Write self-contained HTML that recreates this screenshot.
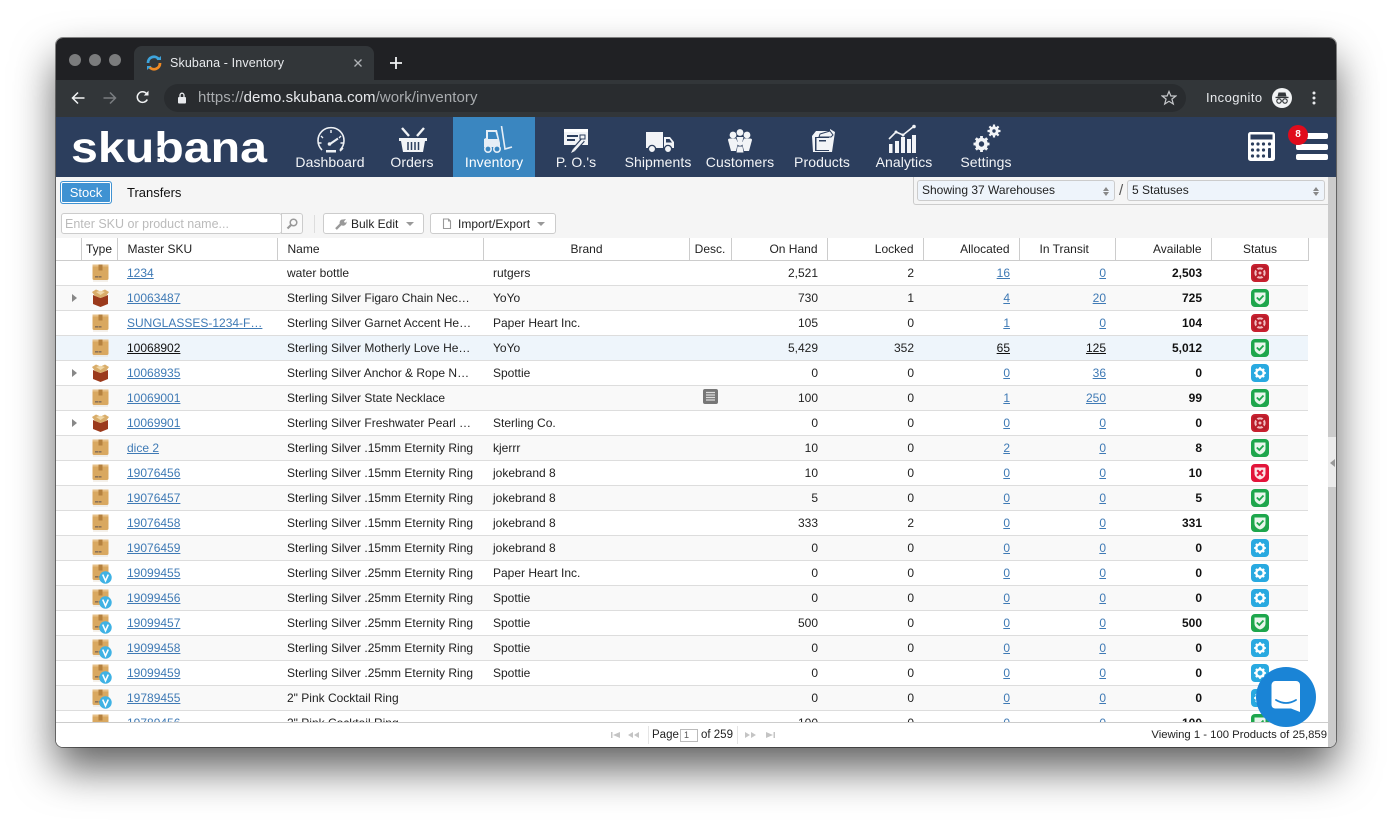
<!DOCTYPE html>
<html><head><meta charset="utf-8"><title>Skubana - Inventory</title>
<style>
*{box-sizing:border-box}
html,body{margin:0;padding:0;width:1392px;height:821px;background:#fff;overflow:hidden;font-family:"Liberation Sans",sans-serif;font-size:12px;color:#222}
.a{position:absolute}
#win{position:absolute;left:56px;top:38px;width:1280px;height:709px;border-radius:7px;box-shadow:0 22px 42px 0 rgba(0,0,0,.62),0 0 0 1px rgba(0,0,0,.45)}
#pg{position:absolute;left:0;top:0;width:1392px;height:821px}
.nl{position:absolute;top:154px;width:82px;text-align:center;font-size:14px;line-height:16px;color:#f2f4f7;letter-spacing:.08px}
.btn{position:absolute;top:213px;height:21px;background:#fff;border:1px solid #ccc;border-radius:3px;font-size:12px;line-height:20px;color:#222}
.car{position:absolute;width:0;height:0;border-left:4px solid transparent;border-right:4px solid transparent;border-top:4px solid #999;top:8px}
table{border-collapse:collapse;table-layout:fixed;width:1252px}
th{font-weight:normal;height:22px;padding:0 9px 0 10px;border-right:1px solid #ccc;border-bottom:1px solid #ccc;text-align:left;white-space:nowrap;background:#fff;color:#222}
td{height:25px;padding:0 9px 0 10px;border-bottom:1px solid #ddd;white-space:nowrap;overflow:hidden;color:#222}
tr.o td{background:#fff}tr.e td{background:#f9f9f9}tr.h td{background:#eef5fb}
td.n,th.n{text-align:right}
td b{font-weight:bold;color:#111}
td a{color:#3f7ab5;text-decoration:underline}
tr.h td a{color:#111}
td.i{padding:0;text-align:center;position:relative}
td.i svg{display:block;position:absolute}
td.ar{padding:0;position:relative}
.tri{position:absolute;left:16px;top:8px;width:0;height:0;border-top:4px solid transparent;border-bottom:4px solid transparent;border-left:5px solid #888}
.sel{position:absolute;top:180px;height:21px;background:#eef4fb;border:1px solid #ccc;border-radius:3px;font-size:12px;line-height:19px;padding-left:4px;color:#222}
.sel i{position:absolute;right:5px;width:0;height:0;border-left:3px solid transparent;border-right:3px solid transparent}
.sel i.u{top:6px;border-bottom:4px solid #888}.sel i.d{top:11px;border-top:4px solid #888}
</style></head><body>
<svg width="0" height="0" style="position:absolute">
<defs>
<symbol id="box" viewBox="0 0 17 18"><rect x="0.5" y="0.5" width="16" height="15.5" rx="1.5" fill="#d9a860"/><rect x="0.5" y="0.5" width="16" height="2" fill="#e6c088"/><rect x="6.5" y="0.5" width="4" height="6" fill="#b5813e"/><rect x="3" y="12" width="3" height="1.6" fill="#8a7258"/><rect x="6.5" y="12" width="3" height="1.6" fill="#8a7258"/><rect x="1" y="16.5" width="15" height="1" fill="#e8e1d6"/></symbol>
<symbol id="kit" viewBox="0 0 19 18"><path d="M2 6L9.5 9L17 6V15L9.5 18L2 15Z" fill="#9b3a1c"/><path d="M1 3L5 0.5L9.5 2.5L14 0.5L18 3L15 7L9.5 9L4 7Z" fill="#d9ad6a"/><path d="M5 3L9.5 1.8L14 3L9.5 6Z" fill="#f0d8a8"/></symbol>
<symbol id="life" viewBox="0 0 18 18"><rect width="18" height="18" rx="4" fill="#c7202f"/><rect x="2" y="2" width="14" height="14" rx="2" fill="#b81c2a"/><circle cx="9" cy="9" r="4.600" fill="none" stroke="#f2bcc1" stroke-width="2"/><circle cx="9" cy="9" r="1.500" fill="#f2bcc1"/><path d="M5 5L7.300 7.300M13 5L10.700 7.300M5 13L7.300 10.700M13 13L10.700 10.700" stroke="#b81c2a" stroke-width="1.800"/></symbol>
<symbol id="ok" viewBox="0 0 18 18"><rect width="18" height="18" rx="4" fill="#1ea64c"/><path d="M3.500 3.500H14.500V9.500C14.500 12.500 12 14.500 9 15.500C6 14.500 3.500 12.500 3.500 9.500Z" fill="#e9f6ec"/><path d="M5.800 8.500L8.300 11L12.500 6.500" fill="none" stroke="#1ea64c" stroke-width="1.800"/></symbol>
<symbol id="gear" viewBox="0 0 18 18"><rect width="18" height="18" rx="4" fill="#29a9e0"/><circle cx="9" cy="9" r="3.700" fill="none" stroke="#fff" stroke-width="2.400"/><path d="M9 3.200V5.500M9 12.500V14.800M3.200 9H5.500M12.500 9H14.800M4.900 4.900L6.500 6.500M11.500 11.500L13.100 13.100M13.100 4.900L11.500 6.500M6.500 11.500L4.900 13.100" stroke="#fff" stroke-width="2"/></symbol>
<symbol id="xx" viewBox="0 0 18 18"><rect width="18" height="18" rx="4" fill="#e2143a"/><path d="M3.500 3.500H14.500V9.500C14.500 12.500 12 14.500 9 15.500C6 14.500 3.500 12.500 3.500 9.500Z" fill="#fbe3e7"/><path d="M6.200 6.200L11.800 11.800M11.800 6.200L6.200 11.800" stroke="#e2143a" stroke-width="2.100"/></symbol>
<symbol id="v" viewBox="0 0 14 14"><circle cx="7" cy="7" r="6.700" fill="#3fb2e4"/><path d="M4 3.800L7 10.600L10 3.800" fill="none" stroke="#fff" stroke-width="1.700"/></symbol>
</defs></svg>

<div id="win"></div>
<div id="pg">
<!-- Chrome -->
<div class="a" style="left:56px;top:38px;width:1280px;height:709px;border-radius:7px;overflow:hidden;background:#fff">
<div class="a" style="left:0;top:0;width:1280px;height:42px;background:#202124"></div>
<div class="a" style="left:0;top:42px;width:1280px;height:37px;background:#323639"></div>
<div class="a" style="left:78px;top:8px;width:240px;height:34px;background:#323639;border-radius:8px 8px 0 0"></div>
</div>
<div class="a" style="left:69px;top:54px;width:12px;height:12px;border-radius:50%;background:#7b7c7d"></div>
<div class="a" style="left:89px;top:54px;width:12px;height:12px;border-radius:50%;background:#7b7c7d"></div>
<div class="a" style="left:109px;top:54px;width:12px;height:12px;border-radius:50%;background:#7b7c7d"></div>
<svg class="a" style="left:146px;top:55px" width="16" height="16" viewBox="0 0 16 16"><path d="M2 8A6 6 0 0 1 13 4.500" fill="none" stroke="#3ea4dc" stroke-width="2.800"/><path d="M14 8A6 6 0 0 1 3 11.500" fill="none" stroke="#f08a24" stroke-width="2.800"/><path d="M10.500 5H15V1Z" fill="#3ea4dc"/><path d="M5.500 11H1V15Z" fill="#3ea4dc"/></svg>
<div class="a" style="left:170px;top:55px;font-size:12.500px;line-height:16px;color:#e8eaed;white-space:nowrap;letter-spacing:.12px">Skubana - Inventory</div>
<svg class="a" style="left:354px;top:59px" width="8" height="8"><path d="M0.500 0.500L7.500 7.500M7.500 0.500L0.500 7.500" stroke="#b0b3b6" stroke-width="1.300"/></svg>
<svg class="a" style="left:389px;top:56px" width="14" height="14"><path d="M7 1V13M1 7H13" stroke="#f1f3f4" stroke-width="1.800"/></svg>
<svg class="a" style="left:71px;top:91px" width="14" height="14" viewBox="0 0 14 14"><path d="M13.500 7H1.500M7 1.500L1.500 7L7 12.500" fill="none" stroke="#f1f3f4" stroke-width="1.500"/></svg>
<svg class="a" style="left:103px;top:91px" width="14" height="14" viewBox="0 0 14 14"><path d="M0.500 7H12.500M7 1.500L12.500 7L7 12.500" fill="none" stroke="#7a7d80" stroke-width="1.500"/></svg>
<svg class="a" style="left:135px;top:90px" width="15" height="15" viewBox="0 0 15 15"><path d="M12.300 9.500A5.300 5.300 0 1 1 11.500 3.500" fill="none" stroke="#f1f3f4" stroke-width="1.500"/><path d="M8.800 5.500H13.500V0.800Z" fill="#f1f3f4"/></svg>
<div class="a" style="left:164px;top:84px;width:1022px;height:28px;background:#292c2f;border-radius:14px"></div>
<svg class="a" style="left:177px;top:92px" width="10" height="12" viewBox="0 0 10 12"><rect x="1" y="5" width="8" height="6.500" rx="1" fill="#e8eaed"/><path d="M3 5V3.200A2 2 0 0 1 7 3.200V5" fill="none" stroke="#e8eaed" stroke-width="1.300"/></svg>
<div class="a" style="left:198px;top:90px;font-size:15px;line-height:16px;white-space:nowrap;color:#e8eaed;letter-spacing:.07px"><span style="color:#a9acaf">https://</span>demo.skubana.com<span style="color:#a9acaf">/work/inventory</span></div>
<svg class="a" style="left:1161px;top:90px" width="16" height="16" viewBox="0 0 16 16"><path d="M8 1.500L9.900 6H14.800L10.900 9.100L12.300 14L8 11.300L3.700 14L5.100 9.100L1.200 6H6.100Z" fill="none" stroke="#c5c7ca" stroke-width="1.200"/></svg>
<div class="a" style="left:1206px;top:90px;font-size:13px;line-height:16px;color:#e8eaed;white-space:nowrap;letter-spacing:.42px">Incognito</div>
<svg class="a" style="left:1272px;top:88px" width="20" height="20" viewBox="0 0 20 20"><circle cx="10" cy="10" r="10" fill="#f1f3f4"/><path d="M6.500 4.500H13.500L14.500 8.500H5.500Z" fill="#323639"/><rect x="3.500" y="8.800" width="13" height="1.300" fill="#323639"/><circle cx="7" cy="13" r="2.200" fill="none" stroke="#323639" stroke-width="1.100"/><circle cx="13" cy="13" r="2.200" fill="none" stroke="#323639" stroke-width="1.100"/><path d="M9 13H11" stroke="#323639"/></svg>
<svg class="a" style="left:1312px;top:91px" width="4" height="14"><circle cx="2" cy="2" r="1.500" fill="#e8eaed"/><circle cx="2" cy="7" r="1.500" fill="#e8eaed"/><circle cx="2" cy="12" r="1.500" fill="#e8eaed"/></svg>

<!-- Nav -->
<div class="a" style="left:56px;top:117px;width:1280px;height:60px;background:#2c3e5d"></div>
<div class="a" style="left:453px;top:117px;width:82px;height:60px;background:#3a86c0"></div>
<svg class="a" style="left:70px;top:122px" width="200" height="46" viewBox="0 0 200 46"><text x="1" y="40" font-family="'Liberation Sans',sans-serif" font-weight="bold" font-size="43" fill="#fff" textLength="196" lengthAdjust="spacingAndGlyphs">skubana</text><path d="M83 26L91 24M85 35L90 36" fill="none" stroke="#2c3e5d" stroke-width="1.600"/></svg>

<svg class="a" style="left:316px;top:126px" width="30" height="28" viewBox="0 0 30 28" fill="none" stroke="#eef1f5"><path d="M6 24A13 13 0 1 1 24 24" stroke-width="1.600"/><path d="M15 4V7M5 10L7 12M25 10L23 12M2.500 17H5.500M24.500 17H27.500" stroke-width="1.400"/><path d="M14 18L22 12.500" stroke-width="2"/><circle cx="13.500" cy="18" r="1.800" fill="#eef1f5" stroke="none"/><rect x="10" y="24" width="10" height="2.500" fill="#eef1f5" stroke="none"/><path d="M24 25L27 22" stroke-width="1.600"/></svg>
<svg class="a" style="left:398px;top:127px" width="30" height="26" viewBox="0 0 30 26"><path d="M1 11H29V14H27L25 25H5L3 14H1Z" fill="#f2f4f7"/><path d="M4 1L11 9M26 1L19 9" stroke="#f2f4f7" stroke-width="2.400"/><path d="M10 15V23M13.500 15V23M17 15V23M20.500 15V23" stroke="#2c3e5d" stroke-width="1.500"/></svg>
<svg class="a" style="left:483px;top:126px" width="30" height="28" viewBox="0 0 30 28"><path d="M3 4H14L17 17V21H1V13L3 12Z" fill="#e6eef6"/><path d="M5 6H12.500L14.500 13H5Z" fill="#3a86c0"/><circle cx="5" cy="23" r="3.200" fill="#3a86c0" stroke="#e6eef6" stroke-width="1.600"/><circle cx="14" cy="23" r="3.200" fill="#3a86c0" stroke="#e6eef6" stroke-width="1.600"/><path d="M18.500 0L22 23L29 21" fill="none" stroke="#e6eef6" stroke-width="1.600"/></svg>
<svg class="a" style="left:563px;top:128px" width="26" height="26" viewBox="0 0 26 26"><rect x="1" y="1" width="24" height="16" fill="#f2f4f7"/><rect x="1" y="1" width="24" height="3" fill="#fff"/><path d="M4 7H15V9H4ZM4 11H12V13H4Z" fill="#2c3e5d"/><rect x="17" y="7" width="5" height="4" fill="none" stroke="#2c3e5d"/><path d="M20 12L11 22" stroke="#2c3e5d" stroke-width="5"/><path d="M20 12L11 22" stroke="#f2f4f7" stroke-width="2.600"/><path d="M8 25L10 21L12 23Z" fill="#f2f4f7"/></svg>
<svg class="a" style="left:645px;top:130px" width="30" height="24" viewBox="0 0 30 24"><path d="M1 2H18V18H1Z" fill="#f2f4f7"/><path d="M19 7H25L29 12V18H19Z" fill="#f2f4f7"/><path d="M21 9H24.500L27 12.500H21Z" fill="#2c3e5d"/><circle cx="7" cy="19" r="3.600" fill="#f2f4f7" stroke="#2c3e5d" stroke-width="1.300"/><circle cx="23" cy="19" r="3.600" fill="#f2f4f7" stroke="#2c3e5d" stroke-width="1.300"/></svg>
<svg class="a" style="left:727px;top:129px" width="26" height="24" viewBox="0 0 26 24" fill="#f2f4f7"><circle cx="13" cy="3.500" r="3.400"/><circle cx="6" cy="6" r="3.400"/><circle cx="20" cy="6" r="3.400"/><path d="M1 11Q1 9.500 3 9.500H9L11 14L9 22H4Z"/><path d="M25 11Q25 9.500 23 9.500H17L15 14L17 22H22Z"/><path d="M9.500 8H16.500L15.500 12H10.500Z"/><circle cx="13" cy="14" r="2.800"/><path d="M9.500 23.500L10.500 17.500H15.500L16.500 23.500Z"/></svg>
<svg class="a" style="left:810px;top:128px" width="26" height="26" viewBox="0 0 26 26"><path d="M2 8L6 3H20V1L25 4L22 24H3Z" fill="#f2f4f7"/><path d="M5 9H19V23H5Z" fill="#2c3e5d"/><path d="M6.500 10H19V22H6.500Z" fill="#f2f4f7"/><path d="M10 6L20 3L23 7L21 9H9Z" fill="#f2f4f7" stroke="#2c3e5d"/><path d="M9 12H16V13.500H9Z" fill="#2c3e5d"/></svg>
<svg class="a" style="left:888px;top:124px" width="30" height="30" viewBox="0 0 30 30" fill="#f2f4f7"><rect x="1" y="20" width="3.500" height="9"/><rect x="7" y="17" width="4" height="12"/><rect x="13" y="13" width="4" height="16"/><rect x="19" y="15" width="4" height="14"/><rect x="24" y="11" width="4" height="18"/><path d="M1 15L8 8L15 11L25 3" fill="none" stroke="#f2f4f7" stroke-width="1.600"/><circle cx="8" cy="8" r="1.500"/><circle cx="15" cy="11" r="1.500"/><circle cx="26" cy="2.500" r="1.800"/></svg>
<svg class="a" style="left:972px;top:123px" width="30" height="30" viewBox="0 0 30 30"><g fill="none" stroke="#f2f4f7"><circle cx="9.500" cy="21" r="4.500" stroke-width="3.600"/><path d="M9.500 13V29M1.500 21H17.500M3.800 15.300L15.200 26.700M15.200 15.300L3.800 26.700" stroke-width="2.800" stroke-dasharray="3 10"/><circle cx="22" cy="8" r="3.200" stroke-width="3"/><path d="M22 1.500V14.500M15.500 8H28.500M17.400 3.400L26.600 12.600M26.600 3.400L17.400 12.600" stroke-width="2.200" stroke-dasharray="2.500 8"/></g></svg>

<div class="nl" style="left:289px">Dashboard</div>
<div class="nl" style="left:371px">Orders</div>
<div class="nl" style="left:453px;color:#fff">Inventory</div>
<div class="nl" style="left:535px">P. O.'s</div>
<div class="nl" style="left:617px">Shipments</div>
<div class="nl" style="left:699px">Customers</div>
<div class="nl" style="left:781px">Products</div>
<div class="nl" style="left:863px">Analytics</div>
<div class="nl" style="left:945px">Settings</div>

<svg class="a" style="left:1248px;top:132px" width="27" height="29" viewBox="0 0 27 29"><rect width="27" height="29" rx="2.500" fill="#fff"/><rect x="2.500" y="2.500" width="22" height="5" fill="#2c3e5d"/><g fill="#2c3e5d"><circle cx="4.500" cy="12" r="1.600"/><circle cx="10" cy="12" r="1.600"/><circle cx="15.500" cy="12" r="1.600"/><circle cx="21.500" cy="12" r="1.600"/><circle cx="4.500" cy="18" r="1.600"/><circle cx="10" cy="18" r="1.600"/><circle cx="15.500" cy="18" r="1.600"/><circle cx="4.500" cy="24" r="1.600"/><circle cx="10" cy="24" r="1.600"/><circle cx="15.500" cy="24" r="1.600"/><rect x="20" y="16" width="3" height="10" rx="1"/></g></svg>
<div class="a" style="left:1296px;top:133px;width:32px;height:6px;border-radius:2px;background:#fff"></div>
<div class="a" style="left:1296px;top:144px;width:32px;height:5.500px;border-radius:2px;background:#fff"></div>
<div class="a" style="left:1296px;top:154px;width:32px;height:6px;border-radius:2px;background:#fff"></div>
<div class="a" style="left:1288px;top:125px;width:20px;height:20px;border-radius:50%;background:#e00b1c;color:#fff;font-size:10px;font-weight:bold;line-height:20px;text-align:center">8</div>

<!-- Toolbar area -->
<div class="a" style="left:56px;top:177px;width:1272px;height:61px;background:#f5f5f5"></div>
<div class="a" style="left:60px;top:181px;width:52px;height:23px;background:#3f92d2;border:1px solid #3f92d2;box-shadow:inset 0 0 0 1px #fff;border-radius:3px;color:#fff;text-align:center;font-size:13px;line-height:22px">Stock</div>
<div class="a" style="left:127px;top:185px;font-size:13px;line-height:16px;color:#111">Transfers</div>
<div class="a" style="left:913px;top:177px;width:415px;height:28px;border-left:1px solid #ccc;border-bottom:1px solid #ccc;border-radius:0 0 0 3px"></div>
<div class="sel" style="left:917px;width:198px">Showing 37 Warehouses<i class="u"></i><i class="d"></i></div>
<div class="a" style="left:1119px;top:182px;font-size:15px;line-height:17px;color:#555">/</div>
<div class="sel" style="left:1127px;width:198px">5 Statuses<i class="u"></i><i class="d"></i></div>

<div class="a" style="left:61px;top:213px;width:221px;height:21px;background:#fff;border:1px solid #ccc;border-radius:3px;font-size:12.500px;line-height:20px;padding-left:3px;color:#bbb;white-space:nowrap">Enter SKU or product name...</div>
<div class="a" style="left:281px;top:213px;width:22px;height:21px;background:#fafafa;border:1px solid #ccc;border-radius:0 3px 3px 0"></div>
<svg class="a" style="left:286px;top:218px" width="12" height="12" viewBox="0 0 12 12"><circle cx="7.500" cy="4.500" r="3.300" fill="none" stroke="#999" stroke-width="1.500"/><path d="M5 7L1.500 10.500" stroke="#999" stroke-width="2.200"/></svg>
<div class="a" style="left:314px;top:215px;width:1px;height:18px;background:#ddd"></div>
<div class="btn" style="left:323px;width:101px;padding-left:27px">Bulk Edit<span class="car" style="left:82px"></span></div>
<svg class="a" style="left:335px;top:218px" width="12" height="12" viewBox="0 0 12 12"><path d="M1 11L6.500 5.500" stroke="#999" stroke-width="2.400"/><path d="M6 7A3 3 0 0 1 8 1.500L11 1L9 3.500L10 5L11.500 3.500A3.500 3.500 0 0 1 6 7Z" fill="#999"/></svg>
<div class="btn" style="left:430px;width:126px;padding-left:27px">Import/Export<span class="car" style="left:106px"></span></div>
<svg class="a" style="left:442px;top:218px" width="10" height="12" viewBox="0 0 10 12"><path d="M1.500 1H6.500L8.500 3V10.500H1.500Z" fill="#fff" stroke="#999" stroke-width="1.100"/><path d="M6.500 1V3H8.500" fill="none" stroke="#999"/></svg>

<!-- Right strip -->
<div class="a" style="left:1328px;top:177px;width:8px;height:260px;background:#cbcbcb"></div>
<div class="a" style="left:1328px;top:437px;width:8px;height:50px;background:#ebebeb"></div>
<div class="a" style="left:1328px;top:487px;width:8px;height:260px;background:#cbcbcb;border-radius:0 0 7px 0"></div>
<div class="a" style="left:1330px;top:459px;width:0;height:0;border-top:4px solid transparent;border-bottom:4px solid transparent;border-right:5px solid #999"></div>
<div class="a" style="left:56px;top:238px;width:1272px;height:23px;background:#fff"></div>
<div class="a" style="left:56px;top:260px;width:1272px;height:1px;background:#ccc"></div>

<!-- Table -->
<div class="a" style="left:56px;top:238px;width:1272px;height:484px;overflow:hidden;background:#fff">
<table>
<colgroup><col style="width:25px"><col style="width:36px"><col style="width:160px"><col style="width:206px"><col style="width:206px"><col style="width:42px"><col style="width:96px"><col style="width:96px"><col style="width:96px"><col style="width:96px"><col style="width:96px"><col style="width:97px"></colgroup>
<tr><th></th><th style="text-align:center;padding:0">Type</th><th>Master SKU</th><th>Name</th><th style="text-align:center">Brand</th><th style="padding:0;text-align:center">Desc.</th><th class="n">On Hand</th><th class="n">Locked</th><th class="n">Allocated</th><th style="padding-left:20px">In Transit</th><th class="n">Available</th><th style="text-align:center">Status</th></tr>
<tr class="o"><td class="ar"></td><td class="i"><svg style="left:11px;top:3px" width="17" height="18"><use href="#box"/></svg></td><td><a>1234</a></td><td>water bottle</td><td>rutgers</td><td></td><td class="n">2,521</td><td class="n">2</td><td class="n"><a>16</a></td><td class="n"><a>0</a></td><td class="n"><b>2,503</b></td><td class="i"><svg style="left:40px;top:3px" width="18" height="18"><use href="#life"/></svg></td></tr>
<tr class="e"><td class="ar"><span class="tri"></span></td><td class="i"><svg style="left:10px;top:3px" width="19" height="18"><use href="#kit"/></svg></td><td><a>10063487</a></td><td>Sterling Silver Figaro Chain Nec…</td><td>YoYo</td><td></td><td class="n">730</td><td class="n">1</td><td class="n"><a>4</a></td><td class="n"><a>20</a></td><td class="n"><b>725</b></td><td class="i"><svg style="left:40px;top:3px" width="18" height="18"><use href="#ok"/></svg></td></tr>
<tr class="o"><td class="ar"></td><td class="i"><svg style="left:11px;top:3px" width="17" height="18"><use href="#box"/></svg></td><td><a>SUNGLASSES-1234-F…</a></td><td>Sterling Silver Garnet Accent He…</td><td>Paper Heart Inc.</td><td></td><td class="n">105</td><td class="n">0</td><td class="n"><a>1</a></td><td class="n"><a>0</a></td><td class="n"><b>104</b></td><td class="i"><svg style="left:40px;top:3px" width="18" height="18"><use href="#life"/></svg></td></tr>
<tr class="h"><td class="ar"></td><td class="i"><svg style="left:11px;top:3px" width="17" height="18"><use href="#box"/></svg></td><td><a>10068902</a></td><td>Sterling Silver Motherly Love He…</td><td>YoYo</td><td></td><td class="n">5,429</td><td class="n">352</td><td class="n"><a>65</a></td><td class="n"><a>125</a></td><td class="n"><b>5,012</b></td><td class="i"><svg style="left:40px;top:3px" width="18" height="18"><use href="#ok"/></svg></td></tr>
<tr class="o"><td class="ar"><span class="tri"></span></td><td class="i"><svg style="left:10px;top:3px" width="19" height="18"><use href="#kit"/></svg></td><td><a>10068935</a></td><td>Sterling Silver Anchor &amp; Rope N…</td><td>Spottie</td><td></td><td class="n">0</td><td class="n">0</td><td class="n"><a>0</a></td><td class="n"><a>36</a></td><td class="n"><b>0</b></td><td class="i"><svg style="left:40px;top:3px" width="18" height="18"><use href="#gear"/></svg></td></tr>
<tr class="e"><td class="ar"></td><td class="i"><svg style="left:11px;top:3px" width="17" height="18"><use href="#box"/></svg></td><td><a>10069001</a></td><td>Sterling Silver State Necklace</td><td></td><td class="i"><svg style="left:14px;top:3px" width="15" height="15" viewBox="0 0 15 15"><rect width="15" height="15" rx="2" fill="#777"/><path d="M3 3.500H12M3 6H12M3 8.500H12M3 11H12" stroke="#ddd" stroke-width="1.200"/></svg></td><td class="n">100</td><td class="n">0</td><td class="n"><a>1</a></td><td class="n"><a>250</a></td><td class="n"><b>99</b></td><td class="i"><svg style="left:40px;top:3px" width="18" height="18"><use href="#ok"/></svg></td></tr>
<tr class="o"><td class="ar"><span class="tri"></span></td><td class="i"><svg style="left:10px;top:3px" width="19" height="18"><use href="#kit"/></svg></td><td><a>10069901</a></td><td>Sterling Silver Freshwater Pearl …</td><td>Sterling Co.</td><td></td><td class="n">0</td><td class="n">0</td><td class="n"><a>0</a></td><td class="n"><a>0</a></td><td class="n"><b>0</b></td><td class="i"><svg style="left:40px;top:3px" width="18" height="18"><use href="#life"/></svg></td></tr>
<tr class="e"><td class="ar"></td><td class="i"><svg style="left:11px;top:3px" width="17" height="18"><use href="#box"/></svg></td><td><a>dice 2</a></td><td>Sterling Silver .15mm Eternity Ring</td><td>kjerrr</td><td></td><td class="n">10</td><td class="n">0</td><td class="n"><a>2</a></td><td class="n"><a>0</a></td><td class="n"><b>8</b></td><td class="i"><svg style="left:40px;top:3px" width="18" height="18"><use href="#ok"/></svg></td></tr>
<tr class="o"><td class="ar"></td><td class="i"><svg style="left:11px;top:3px" width="17" height="18"><use href="#box"/></svg></td><td><a>19076456</a></td><td>Sterling Silver .15mm Eternity Ring</td><td>jokebrand 8</td><td></td><td class="n">10</td><td class="n">0</td><td class="n"><a>0</a></td><td class="n"><a>0</a></td><td class="n"><b>10</b></td><td class="i"><svg style="left:40px;top:3px" width="18" height="18"><use href="#xx"/></svg></td></tr>
<tr class="e"><td class="ar"></td><td class="i"><svg style="left:11px;top:3px" width="17" height="18"><use href="#box"/></svg></td><td><a>19076457</a></td><td>Sterling Silver .15mm Eternity Ring</td><td>jokebrand 8</td><td></td><td class="n">5</td><td class="n">0</td><td class="n"><a>0</a></td><td class="n"><a>0</a></td><td class="n"><b>5</b></td><td class="i"><svg style="left:40px;top:3px" width="18" height="18"><use href="#ok"/></svg></td></tr>
<tr class="o"><td class="ar"></td><td class="i"><svg style="left:11px;top:3px" width="17" height="18"><use href="#box"/></svg></td><td><a>19076458</a></td><td>Sterling Silver .15mm Eternity Ring</td><td>jokebrand 8</td><td></td><td class="n">333</td><td class="n">2</td><td class="n"><a>0</a></td><td class="n"><a>0</a></td><td class="n"><b>331</b></td><td class="i"><svg style="left:40px;top:3px" width="18" height="18"><use href="#ok"/></svg></td></tr>
<tr class="e"><td class="ar"></td><td class="i"><svg style="left:11px;top:3px" width="17" height="18"><use href="#box"/></svg></td><td><a>19076459</a></td><td>Sterling Silver .15mm Eternity Ring</td><td>jokebrand 8</td><td></td><td class="n">0</td><td class="n">0</td><td class="n"><a>0</a></td><td class="n"><a>0</a></td><td class="n"><b>0</b></td><td class="i"><svg style="left:40px;top:3px" width="18" height="18"><use href="#gear"/></svg></td></tr>
<tr class="o"><td class="ar"></td><td class="i"><svg style="left:11px;top:3px" width="17" height="18"><use href="#box"/></svg><svg style="left:18px;top:10px" width="13" height="13"><use href="#v"/></svg></td><td><a>19099455</a></td><td>Sterling Silver .25mm Eternity Ring</td><td>Paper Heart Inc.</td><td></td><td class="n">0</td><td class="n">0</td><td class="n"><a>0</a></td><td class="n"><a>0</a></td><td class="n"><b>0</b></td><td class="i"><svg style="left:40px;top:3px" width="18" height="18"><use href="#gear"/></svg></td></tr>
<tr class="e"><td class="ar"></td><td class="i"><svg style="left:11px;top:3px" width="17" height="18"><use href="#box"/></svg><svg style="left:18px;top:10px" width="13" height="13"><use href="#v"/></svg></td><td><a>19099456</a></td><td>Sterling Silver .25mm Eternity Ring</td><td>Spottie</td><td></td><td class="n">0</td><td class="n">0</td><td class="n"><a>0</a></td><td class="n"><a>0</a></td><td class="n"><b>0</b></td><td class="i"><svg style="left:40px;top:3px" width="18" height="18"><use href="#gear"/></svg></td></tr>
<tr class="o"><td class="ar"></td><td class="i"><svg style="left:11px;top:3px" width="17" height="18"><use href="#box"/></svg><svg style="left:18px;top:10px" width="13" height="13"><use href="#v"/></svg></td><td><a>19099457</a></td><td>Sterling Silver .25mm Eternity Ring</td><td>Spottie</td><td></td><td class="n">500</td><td class="n">0</td><td class="n"><a>0</a></td><td class="n"><a>0</a></td><td class="n"><b>500</b></td><td class="i"><svg style="left:40px;top:3px" width="18" height="18"><use href="#ok"/></svg></td></tr>
<tr class="e"><td class="ar"></td><td class="i"><svg style="left:11px;top:3px" width="17" height="18"><use href="#box"/></svg><svg style="left:18px;top:10px" width="13" height="13"><use href="#v"/></svg></td><td><a>19099458</a></td><td>Sterling Silver .25mm Eternity Ring</td><td>Spottie</td><td></td><td class="n">0</td><td class="n">0</td><td class="n"><a>0</a></td><td class="n"><a>0</a></td><td class="n"><b>0</b></td><td class="i"><svg style="left:40px;top:3px" width="18" height="18"><use href="#gear"/></svg></td></tr>
<tr class="o"><td class="ar"></td><td class="i"><svg style="left:11px;top:3px" width="17" height="18"><use href="#box"/></svg><svg style="left:18px;top:10px" width="13" height="13"><use href="#v"/></svg></td><td><a>19099459</a></td><td>Sterling Silver .25mm Eternity Ring</td><td>Spottie</td><td></td><td class="n">0</td><td class="n">0</td><td class="n"><a>0</a></td><td class="n"><a>0</a></td><td class="n"><b>0</b></td><td class="i"><svg style="left:40px;top:3px" width="18" height="18"><use href="#gear"/></svg></td></tr>
<tr class="e"><td class="ar"></td><td class="i"><svg style="left:11px;top:3px" width="17" height="18"><use href="#box"/></svg><svg style="left:18px;top:10px" width="13" height="13"><use href="#v"/></svg></td><td><a>19789455</a></td><td>2" Pink Cocktail Ring</td><td></td><td></td><td class="n">0</td><td class="n">0</td><td class="n"><a>0</a></td><td class="n"><a>0</a></td><td class="n"><b>0</b></td><td class="i"><svg style="left:40px;top:3px" width="18" height="18"><use href="#gear"/></svg></td></tr>
<tr class="o"><td class="ar"></td><td class="i"><svg style="left:11px;top:3px" width="17" height="18"><use href="#box"/></svg></td><td><a>19789456</a></td><td>2" Pink Cocktail Ring</td><td></td><td></td><td class="n">100</td><td class="n">0</td><td class="n"><a>0</a></td><td class="n"><a>0</a></td><td class="n"><b>100</b></td><td class="i"><svg style="left:40px;top:3px" width="18" height="18"><use href="#ok"/></svg></td></tr>
</table>
</div>

<!-- Footer -->
<div class="a" style="left:56px;top:722px;width:1272px;height:25px;background:#fff;border-top:1px solid #ccc;border-radius:0 0 0 7px"></div>
<svg class="a" style="left:610px;top:731px" width="36" height="8" viewBox="0 0 36 8" fill="#c4c4c4"><rect x="1" y="1" width="1.500" height="6"/><path d="M3 4L10 1V7Z"/><path d="M18 4L23 1V7Z"/><path d="M24 4L29 1V7Z"/></svg>
<div class="a" style="left:648px;top:726px;width:1px;height:18px;background:#e5e5e5"></div>
<div class="a" style="left:652px;top:728px;font-size:11.500px;line-height:14px;color:#222">Page</div>
<div class="a" style="left:680px;top:729px;width:18px;height:13px;border:1px solid #bbb;font-size:9px;line-height:11px;padding-left:3px;color:#555;background:#fff">1</div>
<div class="a" style="left:701px;top:728px;font-size:11.500px;line-height:14px;color:#222">of 259</div>
<div class="a" style="left:737px;top:726px;width:1px;height:18px;background:#e5e5e5"></div>
<svg class="a" style="left:745px;top:731px" width="32" height="8" viewBox="0 0 32 8" fill="#c4c4c4"><path d="M0 1L5 4L0 7Z"/><path d="M6 1L11 4L6 7Z"/><path d="M21 1L28 4L21 7Z"/><rect x="28.500" y="1" width="1.500" height="6"/></svg>
<div class="a" style="left:1099px;top:728px;width:228px;text-align:right;font-size:11.300px;line-height:14px;color:#222;white-space:nowrap">Viewing 1 - 100 Products of 25,859</div>

<!-- Chat -->
<div class="a" style="left:1256px;top:667px;width:60px;height:60px;border-radius:50%;background:#1a84d6"></div>
<svg class="a" style="left:1271px;top:680px" width="30" height="33" viewBox="0 0 30 33"><path d="M4 1H25A4 4 0 0 1 29 5V32L20 28.500H4A4 4 0 0 1 0.500 25V5A4 4 0 0 1 4 1Z" fill="#fff"/><path d="M5 20Q15 26 25 20" fill="none" stroke="#1a84d6" stroke-width="1.800" stroke-linecap="round"/></svg>
</div>
</body></html>
